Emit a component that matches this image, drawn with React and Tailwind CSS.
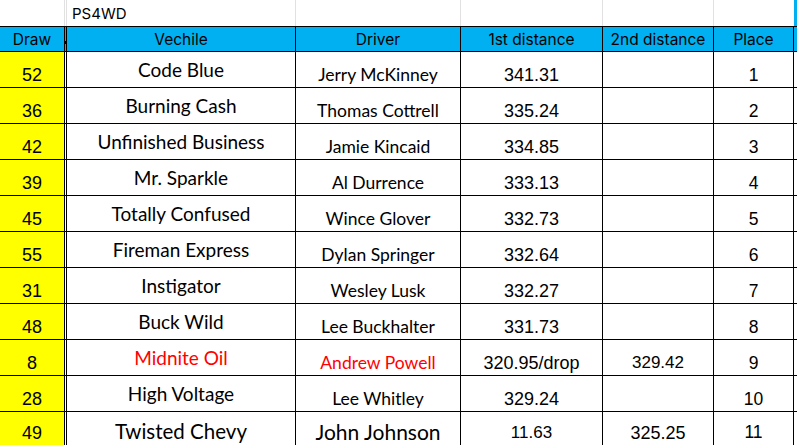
const rows = [
  { draw: '52', car: 'Code Blue', driver: 'Jerry McKinney', d1: '341.31', d2: '', place: '1' },
  { draw: '36', car: 'Burning Cash', driver: 'Thomas Cottrell', d1: '335.24', d2: '', place: '2' },
  { draw: '42', car: 'Unfinished Business', driver: 'Jamie Kincaid', d1: '334.85', d2: '', place: '3' },
  { draw: '39', car: 'Mr. Sparkle', driver: 'Al Durrence', d1: '333.13', d2: '', place: '4' },
  { draw: '45', car: 'Totally Confused', driver: 'Wince Glover', d1: '332.73', d2: '', place: '5' },
  { draw: '55', car: 'Fireman Express', driver: 'Dylan Springer', d1: '332.64', d2: '', place: '6' },
  { draw: '31', car: 'Instigator', driver: 'Wesley Lusk', d1: '332.27', d2: '', place: '7' },
  { draw: '48', car: 'Buck Wild', driver: 'Lee Buckhalter', d1: '331.73', d2: '', place: '8' },
  { draw: '8', car: 'Midnite Oil', driver: 'Andrew Powell', d1: '320.95/drop', d2: '329.42', place: '9', red: true },
  { draw: '28', car: 'High Voltage', driver: 'Lee Whitley', d1: '329.24', d2: '', place: '10' },
];

const calibri = "font-['Lato','Open_Sans',sans-serif]";
const arial = "font-['Liberation_Sans',Arial,sans-serif]";
const aptos = "font-['Inter','Noto_Sans',sans-serif]";

function DataRow({ r }) {
  const txt = r.red ? 'text-[#ff0000]' : 'text-black';
  return (
    <div className="flex h-[36px] border-b border-black">
      <div className={`w-[65px] shrink-0 bg-[#ffff00] border-r border-black flex items-end justify-center pb-[3px] text-[18px] leading-none ${arial}`}>
        {r.draw}
      </div>
      <div className="w-[2px] shrink-0 border-r border-black" />
      <div className={`w-[229px] shrink-0 border-r border-black flex items-center justify-center pb-[1px] text-[19px] leading-none ${calibri} ${txt}`}>
        {r.car}
      </div>
      <div className={`w-[165px] shrink-0 border-r border-black flex items-end justify-center pb-[4px] text-[17.5px] leading-none ${calibri} ${txt}`}>
        {r.driver}
      </div>
      <div className={`w-[142px] shrink-0 border-r border-black flex items-end justify-center pb-[3px] text-[18px] leading-none ${arial}`}>
        {r.d1}
      </div>
      <div className={`w-[111px] shrink-0 border-r border-black flex items-end justify-center pb-[4px] text-[17px] leading-none ${arial}`}>
        {r.d2}
      </div>
      <div className={`w-[80px] shrink-0 border-r border-black flex items-end justify-center pb-[3px] text-[17.5px] leading-none ${arial}`}>
        {r.place}
      </div>
      <div className="flex-1" />
    </div>
  );
}

export default function App() {
  return (
    <div className="w-[797px] h-[445px] overflow-hidden bg-white text-black">
      {/* sheet title row */}
      <div className="flex h-[26px]">
        <div className="w-[65px] shrink-0 border-r border-[#e1e1e1]" />
        <div className="w-[2px] shrink-0 border-r border-[#e1e1e1]" />
        <div className={`w-[229px] shrink-0 border-r border-[#e1e1e1] flex items-center pl-[5px] pt-[2px] text-[15px] ${aptos}`}>
          PS4WD
        </div>
        <div className="w-[165px] shrink-0 border-r border-[#e1e1e1]" />
        <div className="w-[142px] shrink-0 border-r border-[#e1e1e1]" />
        <div className="w-[111px] shrink-0 border-r border-[#e1e1e1]" />
        <div className="w-[80px] shrink-0" />
        <div className="flex-1 bg-[#00b0f0]" />
      </div>

      {/* header */}
      <div className={`flex h-[26px] border-y border-black bg-[#00b0f0] text-[15.5px] leading-none ${aptos}`}>
        <div className="w-[65px] shrink-0 border-r border-black flex items-center justify-center pt-[2px]">Draw</div>
        <div className="w-[2px] shrink-0 border-r border-black relative">
          <span className="absolute left-[-1px] top-[14px] w-[2px] h-[3px] bg-black" />
        </div>
        <div className="w-[229px] shrink-0 border-r border-black flex items-center justify-center pt-[2px]">Vechile</div>
        <div className="w-[165px] shrink-0 border-r border-black flex items-center justify-center pt-[2px]">Driver</div>
        <div className="w-[142px] shrink-0 border-r border-black flex items-center justify-center pt-[2px]">1st distance</div>
        <div className="w-[111px] shrink-0 border-r border-black flex items-center justify-center pt-[2px]">2nd distance</div>
        <div className="w-[80px] shrink-0 border-r border-black flex items-center justify-center pt-[2px]">Place</div>
        <div className="flex-1" />
      </div>

      {rows.map((r) => (
        <DataRow key={r.draw} r={r} />
      ))}

      {/* last row, larger type */}
      <div className="flex h-[40px] border-b border-black">
        <div className={`w-[65px] shrink-0 bg-[#ffff00] border-r border-black flex items-center justify-center pt-[2px] text-[18px] leading-none ${arial}`}>
          49
        </div>
        <div className="w-[2px] shrink-0 border-r border-black" />
        <div className={`w-[229px] shrink-0 border-r border-black flex items-center justify-center text-[20.5px] leading-none ${calibri}`}>
          Twisted Chevy
        </div>
        <div className={`w-[165px] shrink-0 border-r border-black flex items-center justify-center text-[21px] leading-none ${calibri}`}>
          John Johnson
        </div>
        <div className={`w-[142px] shrink-0 border-r border-black flex items-center justify-center pt-[2px] text-[17px] leading-none ${arial}`}>
          11.63
        </div>
        <div className={`w-[111px] shrink-0 border-r border-black flex items-center justify-center pt-[2px] text-[18px] leading-none ${arial}`}>
          325.25
        </div>
        <div className={`w-[80px] shrink-0 border-r border-black flex items-center justify-center pt-[2px] text-[17.5px] leading-none ${arial}`}>
          11
        </div>
        <div className="flex-1" />
      </div>
    </div>
  );
}
